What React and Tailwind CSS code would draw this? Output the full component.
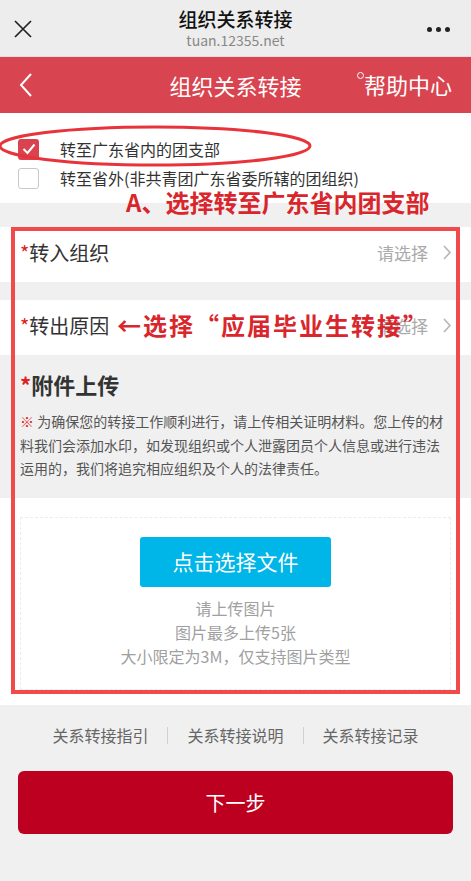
import React from 'react';

const font = { fontFamily: '"Noto Sans CJK SC", "Noto Sans", sans-serif' };

const Chevron = () => (
  <svg width="10" height="17" viewBox="0 0 10 17" className="ml-[14px]">
    <path d="M2 2l6 6.5-6 6.5" fill="none" stroke="#b5b5b5" strokeWidth="1.6" />
  </svg>
);

const SelectRow = ({ label, children }) => (
  <div className="relative flex h-[55px] items-center bg-white pb-[4px] pl-5 pr-[19px]">
    <span className="text-[20px] text-[#333]">
      <span className="text-[#e02020]">*</span>
      {label}
    </span>
    <div className="ml-auto flex items-center text-[17px] text-[#aaa]">
      请选择
      <Chevron />
    </div>
    {children}
  </div>
);

const App = () => {
  return (
    <div className="relative min-h-[881px] w-[471px] overflow-hidden bg-[#f0f0f0]" style={font}>
      {/* barra superior */}
      <div className="relative flex h-[57px] flex-col items-center justify-center border-b border-[#e0e0e0] bg-[#ededed]">
        <svg width="20" height="20" viewBox="0 0 20 20" className="absolute left-[13px] top-[19px]">
          <path d="M2 2l16 16M18 2L2 18" stroke="#222" strokeWidth="1.7" />
        </svg>
        <div className="text-[19px] font-medium leading-[24px] text-[#111]">组织关系转接</div>
        <div className="mt-[1px] text-[14px] leading-[17px] text-[#888]">tuan.12355.net</div>
        <div className="absolute right-[21px] top-[27px] flex gap-[4px]">
          <span className="h-[5px] w-[5px] rounded-full bg-[#222]" />
          <span className="h-[5px] w-[5px] rounded-full bg-[#222]" />
          <span className="h-[5px] w-[5px] rounded-full bg-[#222]" />
        </div>
      </div>

      {/* cabecera roja */}
      <div className="relative flex h-[56px] items-center justify-center bg-[#d8444f]">
        <svg width="14" height="24" viewBox="0 0 14 24" className="absolute left-[19px] top-[16px]">
          <path d="M12 1L2 12l10 11" fill="none" stroke="#fff" strokeWidth="2" />
        </svg>
        <span className="text-[22px] text-white">组织关系转接</span>
        <div className="absolute right-[19px] top-[12px] flex items-start text-white">
          <span className="mt-[3px] h-[7px] w-[7px] rounded-full border border-white" />
          <span className="text-[22px] leading-[30px]">帮助中心</span>
        </div>
      </div>

      {/* opciones */}
      <div className="relative h-[90px] bg-white pt-[22px]">
        <label className="flex h-[28px] items-center">
          <span className="ml-[18px] flex h-[21px] w-[21px] items-center justify-center rounded-[3px] bg-[#d9434f]">
            <svg width="14" height="12" viewBox="0 0 14 12">
              <path d="M1.5 6l4 4L12.5 1.5" fill="none" stroke="#fff" strokeWidth="2" />
            </svg>
          </span>
          <span className="ml-[21px] text-[16px] text-[#333]">转至广东省内的团支部</span>
        </label>
        <label className="mt-[1px] flex h-[28px] items-center">
          <span className="ml-[18px] h-[21px] w-[21px] rounded-[3px] border border-[#c8c8c8] bg-white" />
          <span className="ml-[21px] text-[16px] text-[#333]">转至省外(非共青团广东省委所辖的团组织)</span>
        </label>
        <svg width="316" height="44" viewBox="0 0 316 44" className="absolute left-[-3px] top-[11px]">
          <ellipse cx="158" cy="22" rx="155" ry="19" fill="none" stroke="#e8333b" strokeWidth="3" />
        </svg>
      </div>
      <div className="pointer-events-none absolute left-[126px] top-[189px] z-10 text-[24px] font-bold leading-[26px] text-[#d9262c]">
        A、选择转至广东省内团支部
      </div>

      <div className="h-[24px]" />

      <SelectRow label="转入组织" />
      <div className="h-[18px]" />
      <SelectRow label="转出原因">
        <span className="absolute left-[117px] top-[10px] z-10 text-[24px] font-bold leading-[30px] tracking-[2px] text-[#d9262c]">
          ←选择“应届毕业生转接”
        </span>
      </SelectRow>

      {/* adjuntos */}
      <div className="h-[143px] px-5 pt-[13px]">
        <div className="text-[22px] font-bold leading-[32px] text-[#333]">
          <span className="text-[#e02020]">*</span>附件上传
        </div>
        <p className="mt-[10px] text-[14px] leading-[23.5px] text-[#555]">
          <span className="text-[#e02020]">※</span> 为确保您的转接工作顺利进行，请上传相关证明材料。您上传的材料我们会添加水印，如发现组织或个人泄露团员个人信息或进行违法运用的，我们将追究相应组织及个人的法律责任。
        </p>
      </div>

      <div className="h-[207px] bg-white px-5 pb-[15px] pt-[19px]">
        <div className="flex h-full flex-col items-center border border-dashed border-[#ececec] pt-[19px]">
          <button className="h-[50px] w-[191px] rounded-[3px] bg-[#00b5e8] text-[21px] text-white">
            点击选择文件
          </button>
          <div className="mt-[9px] text-center text-[16px] leading-[24px] text-[#a0a0a0]">
            <div>请上传图片</div>
            <div>图片最多上传5张</div>
            <div>大小限定为3M，仅支持图片类型</div>
          </div>
        </div>
      </div>

      {/* enlaces */}
      <div className="mt-[19px] flex items-center justify-center text-[16px] leading-[22px] text-[#666]">
        <span>关系转接指引</span>
        <span className="mx-[19px] h-[17px] w-px bg-[#d0d0d0]" />
        <span>关系转接说明</span>
        <span className="mx-[19px] h-[17px] w-px bg-[#d0d0d0]" />
        <span>关系转接记录</span>
      </div>

      <div className="px-[18px] pt-[25px]">
        <button className="h-[63px] w-full rounded-[6px] bg-[#be0020] text-[20px] text-white">下一步</button>
      </div>

      {/* marco de anotación */}
      <div className="pointer-events-none absolute left-[11px] top-[227px] h-[467px] w-[449px] border-4 border-[#f04a4a]" />
    </div>
  );
};

export default App;
